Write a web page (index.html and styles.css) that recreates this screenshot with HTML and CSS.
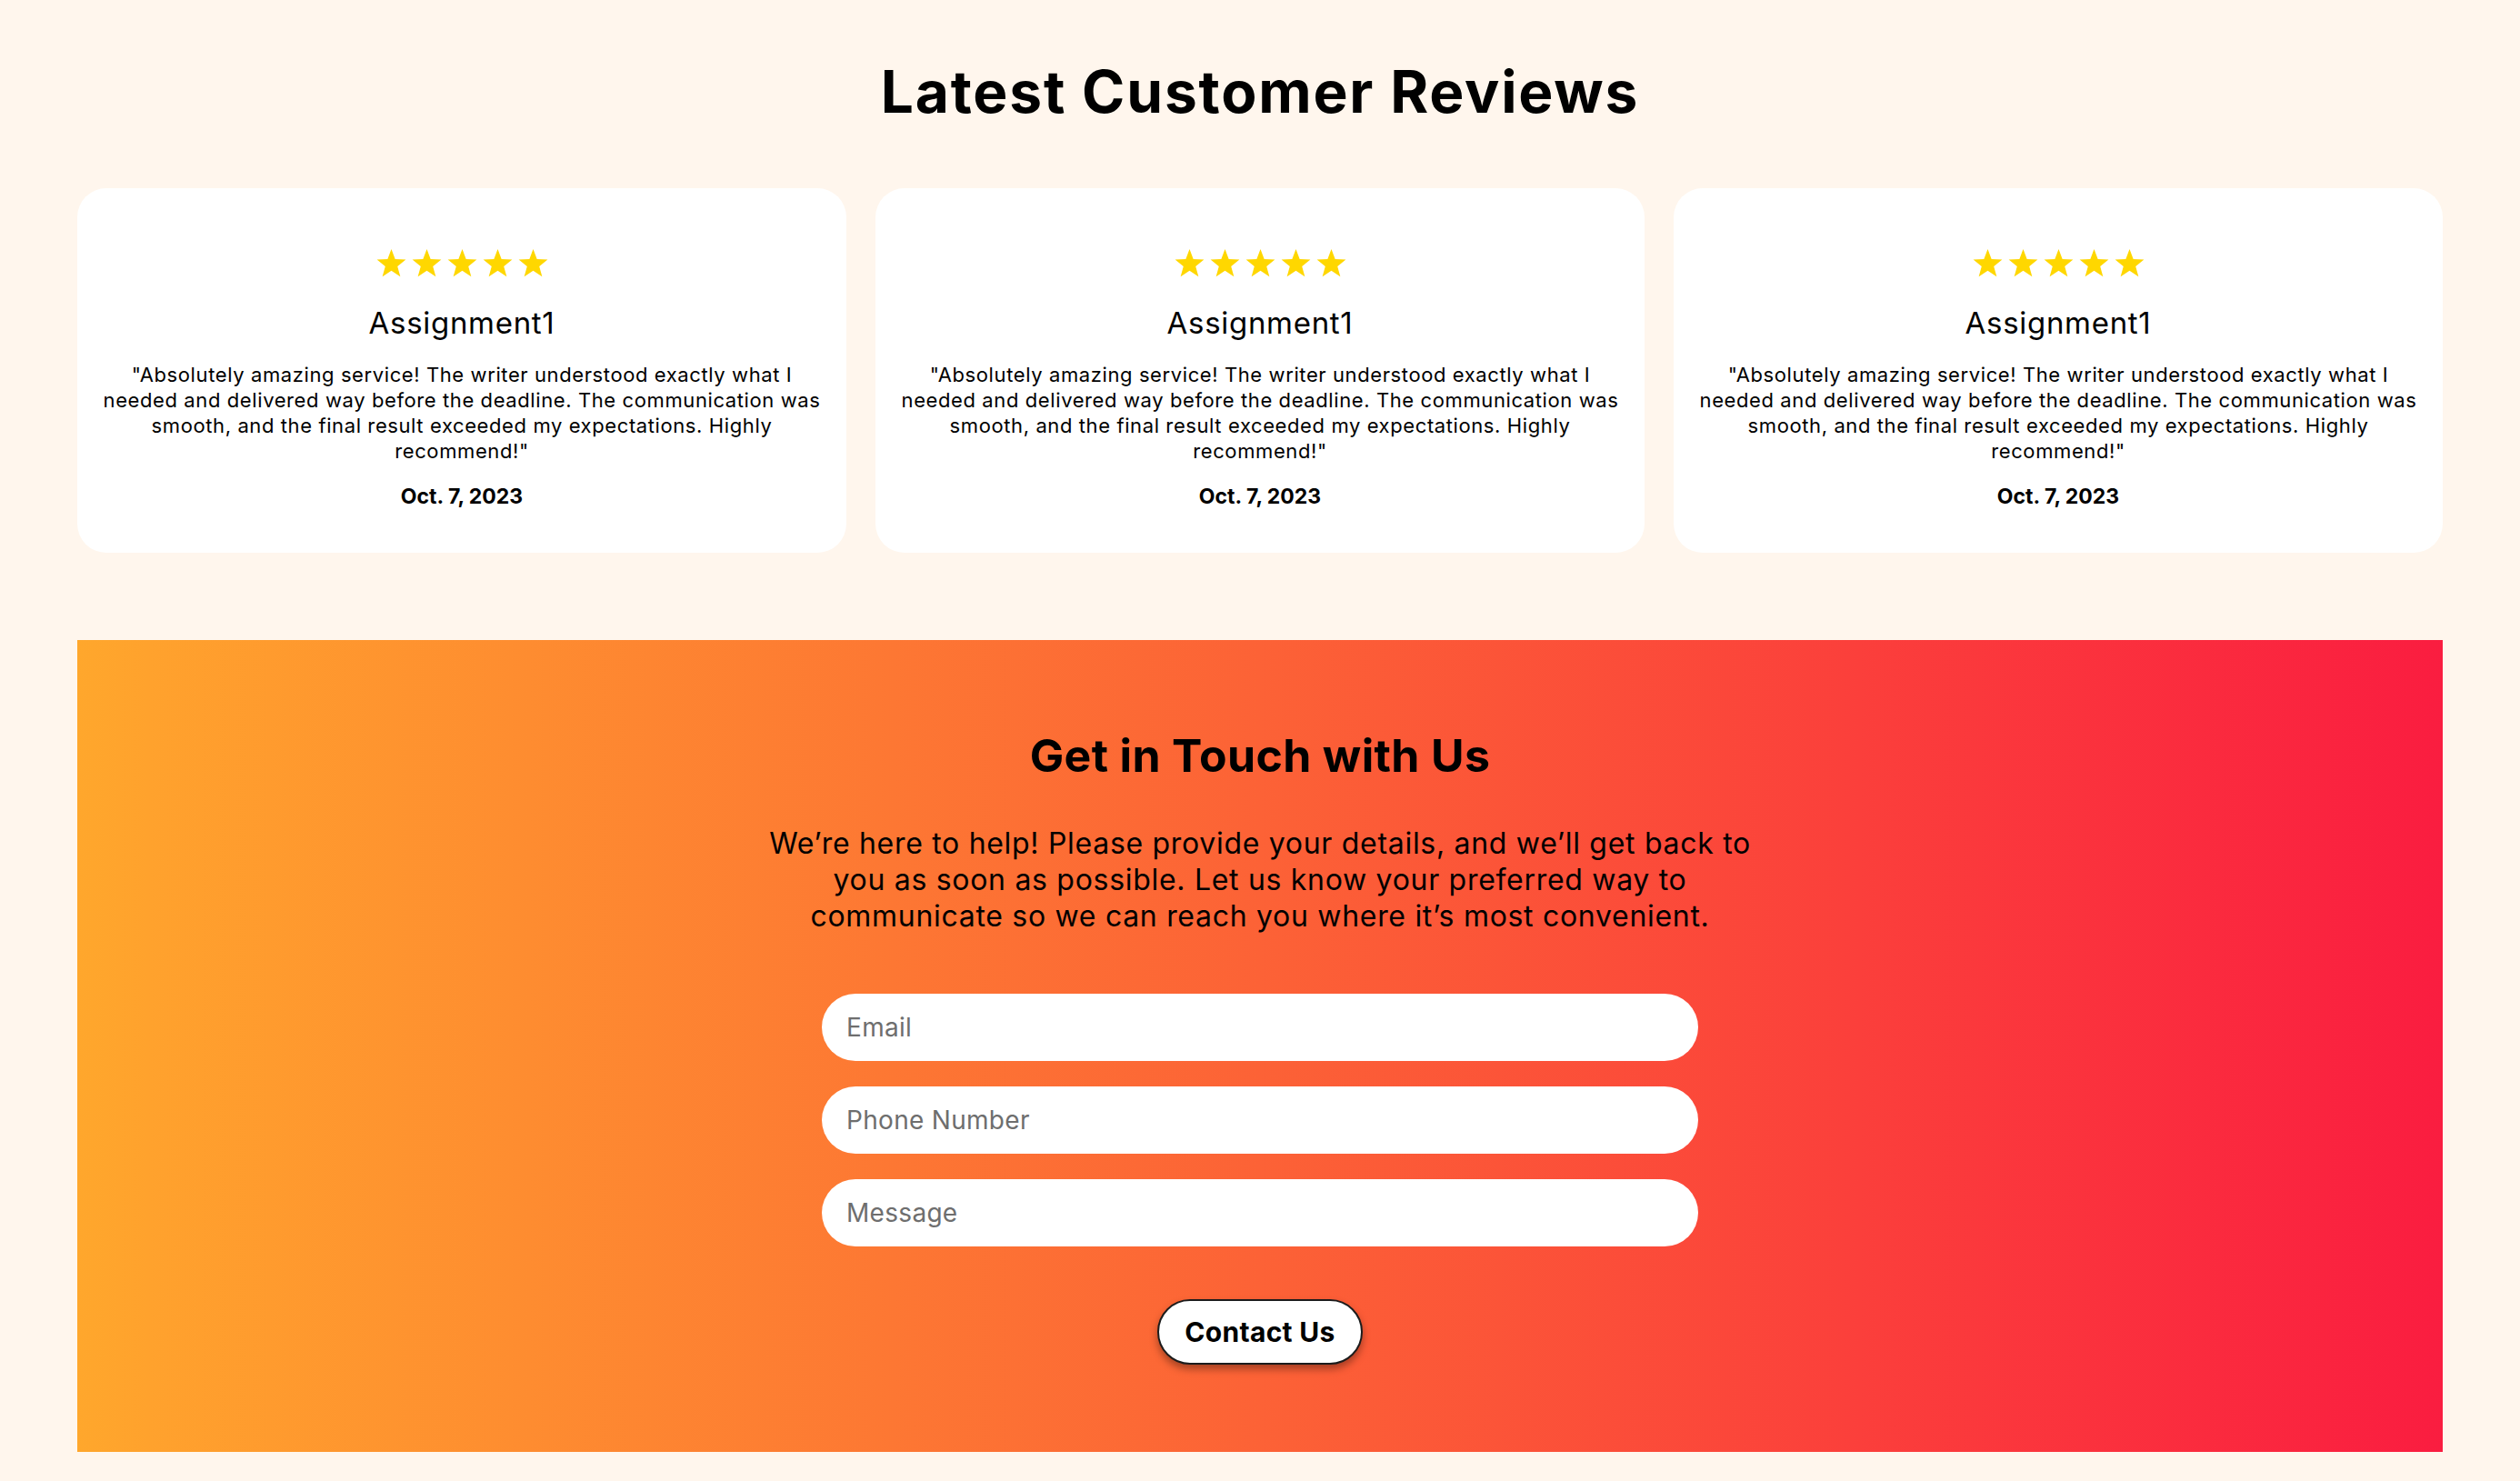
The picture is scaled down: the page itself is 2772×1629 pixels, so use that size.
FILE: index.html
```html
<!DOCTYPE html>
<html lang="en">
<head>
<meta charset="utf-8">
<title>Latest Customer Reviews</title>
<link rel="stylesheet" href="styles.css">
</head>
<body>
<svg class="defs" width="0" height="0" aria-hidden="true">
  <symbol id="star" viewBox="0 0 24 23">
    <path d="M12 0.5l2.85 7.6 8.05.35-6.3 5.05 2.15 7.8L12 16.8l-6.75 4.5 2.15-7.8L1.1 8.45l8.05-.35z"/>
  </symbol>
</svg>
<main class="page">
  <section class="reviews">
    <h1 class="reviews-title">Latest Customer Reviews</h1>
    <div class="cards">
      <article class="card">
        <div class="stars">
          <svg class="star"><use href="#star"/></svg><svg class="star"><use href="#star"/></svg><svg class="star"><use href="#star"/></svg><svg class="star"><use href="#star"/></svg><svg class="star"><use href="#star"/></svg>
        </div>
        <h3 class="card-title">Assignment1</h3>
        <p class="card-text">"Absolutely amazing service! The writer understood exactly what I needed and delivered way before the deadline. The communication was smooth, and the final result exceeded my expectations. Highly recommend!"</p>
        <p class="card-date">Oct. 7, 2023</p>
      </article>
      <article class="card">
        <div class="stars">
          <svg class="star"><use href="#star"/></svg><svg class="star"><use href="#star"/></svg><svg class="star"><use href="#star"/></svg><svg class="star"><use href="#star"/></svg><svg class="star"><use href="#star"/></svg>
        </div>
        <h3 class="card-title">Assignment1</h3>
        <p class="card-text">"Absolutely amazing service! The writer understood exactly what I needed and delivered way before the deadline. The communication was smooth, and the final result exceeded my expectations. Highly recommend!"</p>
        <p class="card-date">Oct. 7, 2023</p>
      </article>
      <article class="card">
        <div class="stars">
          <svg class="star"><use href="#star"/></svg><svg class="star"><use href="#star"/></svg><svg class="star"><use href="#star"/></svg><svg class="star"><use href="#star"/></svg><svg class="star"><use href="#star"/></svg>
        </div>
        <h3 class="card-title">Assignment1</h3>
        <p class="card-text">"Absolutely amazing service! The writer understood exactly what I needed and delivered way before the deadline. The communication was smooth, and the final result exceeded my expectations. Highly recommend!"</p>
        <p class="card-date">Oct. 7, 2023</p>
      </article>
    </div>
  </section>

  <section class="contact">
    <h2 class="contact-title">Get in Touch with Us</h2>
    <p class="contact-text">We’re here to help! Please provide your details, and we’ll get back to you as soon as possible. Let us know your preferred way to communicate so we can reach you where it’s most convenient.</p>
    <form class="contact-form">
      <input class="field" type="email" placeholder="Email">
      <input class="field" type="tel" placeholder="Phone Number">
      <input class="field" type="text" placeholder="Message">
      <button class="contact-btn" type="button">Contact Us</button>
    </form>
  </section>
</main>
</body>
</html>
```

FILE: styles.css
```css
* { box-sizing: border-box; }

html, body {
  margin: 0;
  padding: 0;
  background: #fff6ed;
  color: #000;
  font-family: Inter, "Liberation Sans", sans-serif;
}

.defs { position: absolute; }

.page {
  padding: 62px 85px 32px;
}

.reviews-title {
  margin: 0;
  text-align: center;
  font-size: 64px;
  line-height: 77px;
  font-weight: 700;
  letter-spacing: 1.8px;
}

.cards {
  display: grid;
  grid-template-columns: repeat(3, 1fr);
  gap: 32px;
  margin-top: 68px;
}

.card {
  background: #fff;
  border-radius: 32px;
  padding: 66px 20px 47px;
  display: flex;
  flex-direction: column;
  align-items: center;
  text-align: center;
}

.stars {
  display: flex;
  gap: 4px;
  height: 34px;
}

.star {
  width: 35px;
  height: 34px;
  fill: #ffd700;
}

.card-title {
  margin: 28px 0 0;
  font-size: 33px;
  line-height: 40px;
  font-weight: 400;
  letter-spacing: 0.7px;
}

.card-text {
  margin: 23px 0 0;
  font-size: 22px;
  line-height: 28px;
  letter-spacing: 0.6px;
}

.card-date {
  margin: 21px 0 0;
  font-size: 23px;
  line-height: 30px;
  font-weight: 700;
}

.contact {
  margin-top: 96px;
  height: 893px;
  padding: 97px 0 0;
  background: linear-gradient(90deg, #ffa72c 0%, #ffa22d 3%, #fc6236 50%, #fa1d40 100%);
  display: flex;
  flex-direction: column;
  align-items: center;
  text-align: center;
}

.contact-title {
  margin: 0;
  font-size: 50px;
  line-height: 60px;
  font-weight: 700;
  letter-spacing: 0.35px;
}

.contact-text {
  margin: 47px 0 0;
  max-width: 1100px;
  font-size: 32px;
  line-height: 40px;
  font-weight: 400;
  letter-spacing: 0.7px;
}

.contact-form {
  margin-top: 65px;
  display: flex;
  flex-direction: column;
  align-items: center;
  gap: 28px;
}

.field {
  width: 964px;
  height: 74px;
  border: none;
  border-radius: 37px;
  background: #fff;
  padding: 0 27px;
  font-family: inherit;
  font-size: 28px;
  letter-spacing: 0.3px;
  color: #333;
  outline: none;
}

.field::placeholder {
  color: #6e6e6e;
}

.contact-btn {
  margin-top: 30px;
  width: 226px;
  height: 72px;
  border: 2px solid #1c1c1c;
  border-radius: 36px;
  background: #fff;
  font-family: inherit;
  font-size: 30px;
  font-weight: 700;
  letter-spacing: 0.3px;
  color: #000;
  box-shadow: 0 5px 9px rgba(0, 0, 0, 0.35);
  cursor: pointer;
}
```
